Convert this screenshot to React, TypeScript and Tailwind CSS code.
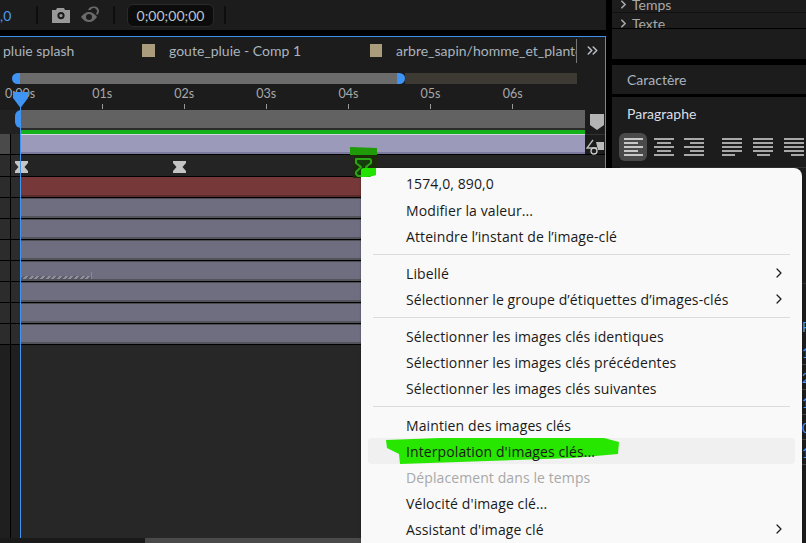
import { ChevronRight, ChevronsRight } from "lucide-react";

const UI_FONT = "font-['Lato',sans-serif]";

const RULER = ["0:00s", "01s", "02s", "03s", "04s", "05s", "06s"];
const LAYER_ROWS = [1, 2, 3, 4, 5, 6, 7];
const ALIGN = [
  { x: "items-center", ml: "ml-[7px]" },
  { x: "items-end", ml: "ml-[10px]" },
  { x: "items-start", ml: "ml-[18px]" },
  { x: "items-center", ml: "ml-[11px]" },
  { x: "items-end", ml: "ml-[11px]" },
];
const BLUE_ROWS = ["1", "2", "1", "0", "1"];

function Hourglass({ color = "#c4c4c4" }: { color?: string }) {
  return (
    <svg width="13" height="12" viewBox="0 0 13 12">
      <path d="M0 0h13v2L9.500 6 13 10v2H0v-2L3.500 6 0 2z" fill={color} />
    </svg>
  );
}

function Gutter({ light }: { light?: boolean }) {
  return (
    <div className="flex w-5 shrink-0 self-stretch">
      <div className={`w-2.5 ${light ? "bg-[#4a4a4a]" : "bg-[#2c2c2c]"}`} />
      <div className="w-px bg-black" />
      <div className="flex-1 bg-[#2c2c2c]" />
    </div>
  );
}

function LayerRow({ red, hatch }: { red?: boolean; hatch?: boolean }) {
  return (
    <div className="flex h-[21px] border-b border-black">
      <Gutter />
      <div
        className={`relative flex-1 border-t border-b-2 ${
          red
            ? "bg-[#763839] border-t-[#763839] border-b-[#5a2b2c]"
            : "bg-[#6f6e80] border-t-[#4c4c52] border-b-[#53535c]"
        }`}
      >
        {hatch && (
          <div className="absolute left-0 bottom-0 flex h-[7px] w-[72px] items-end">
            <div className="h-[3px] flex-1 bg-[repeating-linear-gradient(135deg,#8f8e9b_0_2px,#5d5c6a_2px_4px)]" />
            <div className="h-[7px] w-px bg-[#8a8996]" />
          </div>
        )}
      </div>
      <div className="w-5 shrink-0 bg-[#1c1c1c]" />
    </div>
  );
}

function Menu() {
  const item = "relative flex h-[26px] items-center pl-[38px] pr-[8px]";
  const sep = <div className="mx-[5px] my-[5px] h-px bg-[#dcdcdc]" />;
  return (
    <div className="absolute left-[361px] top-[168px] w-[441px] h-[390px] rounded-lg bg-[#f9f9f9] pt-[2px] px-[7px] font-['Open_Sans',sans-serif] text-[14px] tracking-[0.1px] text-[#1a1a1a] shadow-[0_0_2px_rgba(0,0,0,0.4)]">
      <div className={`${item} h-[27px]`}>1574,0, 890,0</div>
      <div className={item}>Modifier la valeur...</div>
      <div className={item}>Atteindre l’instant de l’image-clé</div>
      {sep}
      <div className={item}>
        <span className="flex-1">Libellé</span>
        <ChevronRight size={16} strokeWidth={1.8} />
      </div>
      <div className={item}>
        <span className="flex-1">Sélectionner le groupe d’étiquettes d’images-clés</span>
        <ChevronRight size={16} strokeWidth={1.8} />
      </div>
      {sep}
      <div className={item}>Sélectionner les images clés identiques</div>
      <div className={item}>Sélectionner les images clés précédentes</div>
      <div className={item}>Sélectionner les images clés suivantes</div>
      {sep}
      <div className={item}>Maintien des images clés</div>
      <div className={`${item} rounded bg-[#f0f0f0]`}>
        <svg className="absolute left-[18px] top-0 overflow-visible" width="234" height="27" viewBox="0 0 234 27">
          <path d="M0 2 54-0 218 0 233 4 232 16 187 20 14 26 13 16 1 10z" fill="#27e600" />
        </svg>
        <span className="relative">Interpolation d'images clés...</span>
      </div>
      <div className={`${item} text-[#a8a8a8]`}>Déplacement dans le temps</div>
      <div className={item}>Vélocité d'image clé...</div>
      <div className={item}>
        <span className="flex-1">Assistant d'image clé</span>
        <ChevronRight size={16} strokeWidth={1.8} />
      </div>
    </div>
  );
}

export default function App() {
  return (
    <div className={`relative flex h-[543px] w-[806px] overflow-hidden bg-black ${UI_FONT}`}>
      {/* left column: toolbar + timeline */}
      <div className="flex w-[606px] shrink-0 flex-col">
        <div className="flex h-[30px] shrink-0 items-center bg-[#1c1c1c] text-[14px]">
          <span className="w-[36px] text-[#4a9bf5]">,0</span>
          <div className="h-[18px] w-[2px] bg-[#0e0e0e]" />
          <svg className="ml-[13px]" width="20" height="15" viewBox="0 0 20 15">
            <path
              fillRule="evenodd"
              d="M1 2h4l1-2h7l1 2h5v13H1zM10 4a3.6 3.6 0 1 0 0 7.200a3.600 3.600 0 0 0 0-7.200zM10 6a1.600 1.600 0 1 1 0 3.200a1.600 1.600 0 0 1 0-3.200z"
              fill="#999"
            />
          </svg>
          <svg className="ml-[10px]" width="20" height="18" viewBox="0 0 20 18">
            <path
              fillRule="evenodd"
              d="M0 11c2-3 5-5 8-5s6 2 8 5c-2 3-5 5-8 5s-6-2-8-5zM8 8a3 3 0 1 0 0 6a3 3 0 0 0 0-6z"
              fill="#6a6a6a"
            />
            <path d="M7 4c1-2.500 3-3.500 6-3.500 3 0 5 2 5 4.500 0 2-1 3-2 4l-1-1.500c.8-.8 1-1.500 1-2.500 0-1.500-1.500-3-3-3-1.500 0-2.500.6-3.500 2z" fill="#6a6a6a" />
          </svg>
          <div className="ml-[12px] h-[18px] w-[2px] bg-[#0e0e0e]" />
          <div className="ml-[12px] flex h-[23px] w-[87px] items-center justify-center rounded-md border border-[#2a2a2a] bg-[#0c0c0c] text-[14px] text-[#b8c4ce]">
            0;00;00;00
          </div>
          <div className="ml-[10px] h-[18px] w-[2px] bg-[#0e0e0e]" />
        </div>
        <div className="h-[6px] shrink-0" />

        {/* timeline panel */}
        <div className="relative flex flex-1 flex-col border-t border-r border-[#3d93ee] bg-[#1c1c1c]">
          <div className="flex h-[29px] shrink-0 items-center pb-[2px] text-[14px] text-[#a9b4bf]">
            <span className="ml-[3px] w-[139px]">pluie splash</span>
            <div className="h-[13px] w-[13px] bg-[#ab9c7d]" />
            <span className="ml-[14px] w-[201px]">goute_pluie - Comp 1</span>
            <div className="h-[13px] w-[12px] bg-[#ab9c7d]" />
            <span className="ml-[14px] h-[24px] w-[181px] overflow-hidden whitespace-nowrap border-r border-[#777] leading-[24px]">
              arbre_sapin/homme_et_plante
            </span>
            <ChevronsRight className="ml-[7px] text-[#b5bcc4]" size={17} strokeWidth={2.2} />
          </div>
          <div className="h-[7px] shrink-0" />

          {/* range bar */}
          <div className="flex h-[11px] shrink-0 items-stretch">
            <div className="ml-[12px] h-[11px] w-[8px] rounded-l-full bg-[#3f93f2]" />
            <div className="w-[377px] bg-[#6b6b6b]" />
            <div className="h-[11px] w-[8px] rounded-r-full bg-[#3f93f2]" />
            <div className="w-[172px] bg-[#3d3a33]" />
          </div>

          {/* ruler */}
          <div className="flex h-[26px] shrink-0 overflow-hidden text-[12.5px] text-[#a8a8a8]">
            {RULER.map((label, i) => (
              <div
                key={label}
                className={`flex w-[82.100px] shrink-0 flex-col items-center pt-[2px] leading-[16px] ${i === 0 ? "-ml-[21px]" : ""}`}
              >
                <span>{label}</span>
                <div className="mt-[2px] h-[5px] w-px bg-[#999]" />
              </div>
            ))}
          </div>

          {/* work area + green bar */}
          <div className="flex h-[24px] shrink-0">
            <div className="w-5 shrink-0 bg-[#222]" />
            <div className="flex flex-1 flex-col">
              <div className="h-[18px] bg-[#626262]" />
              <div className="h-[2px] bg-[#2b2b2b]" />
              <div className="h-[4px] bg-[#12b31a]" />
            </div>
            <div className="w-5 shrink-0 bg-[#1c1c1c]" />
          </div>

          {/* comp layer */}
          <div className="flex h-[21px] shrink-0 border-b border-black">
            <Gutter light />
            <div className="flex-1 border-t border-b-2 border-t-[#d4d3e0] border-b-[#7c7a9e] bg-[#9c9abb]" />
            <div className="w-5 shrink-0 border-t border-[#333] bg-[#1c1c1c]" />
          </div>

          {/* keyframes row */}
          <div className="relative flex h-[22px] shrink-0 border-b border-black bg-[#242424]">
            <Gutter />
          </div>

          <LayerRow red />
          {LAYER_ROWS.map((r) => (
            <LayerRow key={r} hatch={r === 4} />
          ))}

          <div className="flex flex-1">
            <div className="flex w-5 shrink-0">
              <div className="w-2.5 bg-[#1f1f1f]" />
              <div className="w-px bg-black" />
              <div className="flex-1 bg-[#1f1f1f]" />
            </div>
            <div className="flex-1 bg-[#272727]" />
          </div>

          {/* scrollbar */}
          <div className="flex h-[5px] shrink-0 bg-[#1a1a1a]">
            <div className="ml-[145px] w-[216px] bg-[#4a4a4a]" />
          </div>

          {/* keyframe markers on the time track */}
          <div className="absolute left-[15px] top-[124px]">
            <Hourglass />
          </div>
          <div className="absolute left-[173px] top-[124px]">
            <Hourglass />
          </div>

          {/* playhead */}
          <div className="absolute left-[15px] top-[73px] h-[18px] w-[6px] rounded-l-md bg-[#3f93f2]" />
          <svg className="absolute left-[13px] top-[55px]" width="16" height="17" viewBox="0 0 16 17">
            <path d="M0 0h15v6L7.500 16 0 6z" fill="#3f93f2" />
          </svg>
          <div className="absolute bottom-[5px] left-[20px] top-[60px] w-px bg-[#3f93f2]" />

          {/* side markers */}
          <svg className="absolute left-[589px] top-[76px]" width="16" height="18" viewBox="0 0 16 18">
            <path d="M1 1h14v11l-7 5-7-5z" fill="#b4b4b4" />
          </svg>
          <svg className="absolute left-[586px] top-[102px]" width="19" height="16" viewBox="0 0 19 16">
            <path d="M10 3h8v8h-6z" fill="#bbb" />
            <path d="M7 1 1 9h10" fill="none" stroke="#bbb" strokeWidth="1.300" />
            <circle cx="8" cy="12" r="3" fill="#1c1c1c" stroke="#ccc" strokeWidth="1.300" />
          </svg>
        </div>
      </div>

      <div className="w-[6px] shrink-0" />

      {/* right panels */}
      <div className="flex flex-1 flex-col text-[14px]">
        <div className="flex h-[13px] items-end overflow-hidden border-b border-[#111] bg-[#1c1c1c] pl-[5px] text-[#a8a8a8]">
          <ChevronRight size={13} strokeWidth={3.2} className="mb-[1px]" />
          <span className="ml-[2px] leading-[14px]">Temps</span>
        </div>
        <div className="flex h-[15px] items-start overflow-hidden bg-[#1c1c1c] pl-[5px] text-[#a8a8a8]">
          <ChevronRight size={13} strokeWidth={3.2} className="mt-[4px]" />
          <span className="ml-[2px] mt-[2px] leading-[18px]">Texte</span>
        </div>
        <div className="h-px bg-black" />
        <div className="h-[30px] bg-[#1c1c1c]" />
        <div className="h-[6px]" />
        <div className="flex h-[29px] items-center bg-[#1c1c1c] pl-[15px] text-[#a9b4bf]">Caractère</div>
        <div className="h-[3px]" />
        <div className="flex-1 bg-[#1c1c1c]">
          <div className="flex h-[32px] items-center pl-[15px] text-[#d9dfe5]">Paragraphe</div>
          <div className="mt-[4px] flex h-[28px] items-center">
            <div className="ml-[7px] flex h-[28px] w-[28px] flex-col items-start justify-center gap-[2px] rounded-md bg-[#4a4a4a] px-[5px]">
              {[0, 1, 2, 3, 4].map((l) => (
                <div key={l} className={`h-[2px] bg-[#c8c8c8] ${l % 2 ? "w-[14px]" : "w-[19px]"}`} />
              ))}
            </div>
            {ALIGN.map((a, i) => (
              <div key={i} className={`flex w-[20px] shrink-0 flex-col gap-[2px] ${a.x} ${a.ml}`}>
                {[0, 1, 2, 3, 4].map((l) => (
                  <div key={l} className={`h-[2px] bg-[#a8a8a8] ${i > 1 && l === 4 ? "w-[13px]" : l % 2 && i < 2 ? "w-[14px]" : "w-[20px]"}`} />
                ))}
              </div>
            ))}
          </div>
          <div className="ml-[8px] mt-[6px] h-px bg-[#333]" />
          <div className="mt-[115px] border-t border-[#333] pl-[190px] pt-[30px] text-[#4a9bf5]">
            <div className="h-[26px] leading-[26px]">F</div>
            {BLUE_ROWS.map((v, i) => (
              <div key={i} className="h-[25px] border-b border-[#444] leading-[25px]">
                {v}
              </div>
            ))}
          </div>
        </div>
      </div>

      <Menu />

      {/* green scribble over the selected keyframe */}
      <svg className="absolute left-[347px] top-[146px]" width="34" height="34" viewBox="0 0 34 34">
        <path d="M3 1 30 2V9H3z" fill="#1f9a08" />
        <path d="M6 9h24v13H14v10H6z" fill="#1c2b0a" />
        <path d="M9 13h14l1 1v3l-5 4 4 4v5H11l-2-2v-2l5-5-5-4z" fill="#173d0c" stroke="#2aa514" strokeWidth="2" strokeLinejoin="round" />
        <path d="M14 24Q14 22 17 22H29V29Q23 31 14 31z" fill="#22e400" />
      </svg>
    </div>
  );
}
